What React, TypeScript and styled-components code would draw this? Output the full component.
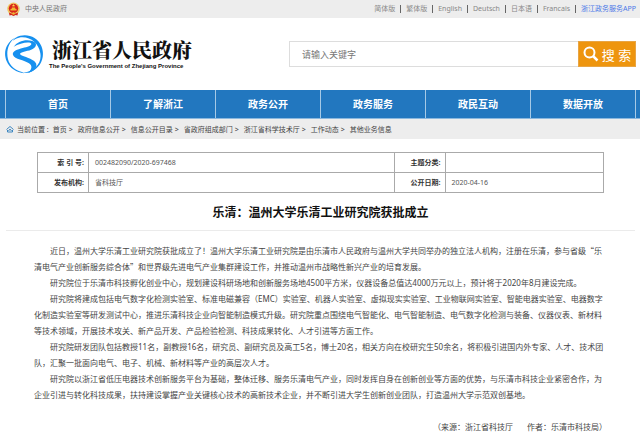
import React from "react";
import styled, { createGlobalStyle } from "styled-components";

const cjk = '"Noto Sans CJK SC", sans-serif';
const sans = `"Noto Sans", ${cjk}`;

const GlobalStyle = createGlobalStyle`
  * { box-sizing: border-box; }
  body { margin: 0; background: #fff; color: #444; font-family: ${sans}; }
  a { color: inherit; text-decoration: none; }
`;

const TopBar = styled.div`
  display: flex;
  justify-content: space-between;
  align-items: center;
  height: 18px;
  padding: 0 4px 0 7px;
  background: #ededed;
  color: #777;
  font-size: 7px;
  line-height: 16px;
  white-space: nowrap;
`;

const CentralLink = styled.a`
  display: flex;
  align-items: center;
  gap: 5px;
`;

const Languages = styled.nav`
  display: flex;
  align-items: center;
`;

const Language = styled.a<{ $accent?: boolean }>`
  display: flex;
  align-items: center;
  color: ${(p) => (p.$accent ? "#4a78e8" : "#888")};
  &:not(:first-child)::before {
    content: "";
    width: 1px;
    height: 8px;
    margin: 0 5px;
    background: #666;
  }
`;

const Header = styled.header`
  display: flex;
  justify-content: space-between;
  align-items: center;
  height: 72px;
  padding: 0 4px 0 5px;
`;

const Brand = styled.a`
  display: flex;
  align-items: center;
  gap: 5px;
  color: #111;
`;

const BrandText = styled.span`
  display: flex;
  flex-direction: column;
  white-space: nowrap;
`;

const BrandName = styled.span`
  padding-left: 3px;
  font: 900 20px/24px "Noto Serif CJK SC", ${cjk};
`;

const BrandEnglish = styled.span`
  font: bold 6px/8px "Liberation Sans", sans-serif;
`;

const Search = styled.form`
  display: flex;
  width: 55%;
  height: 26px;
`;

const SearchInput = styled.input`
  flex: 1;
  min-width: 0;
  padding: 0 12px;
  border: 1px solid #ddd;
  border-right: 0;
  border-radius: 0;
  background: #fff;
  font: 9px ${sans};
  outline: 0;
  &::placeholder { color: #777; opacity: 1; }
`;

const SearchButton = styled.button`
  display: flex;
  align-items: center;
  justify-content: center;
  gap: 3px;
  width: 58px;
  padding: 0;
  border: 1px solid #e8a544;
  background: #ee950e;
  color: #fff;
  font: 13px ${sans};
  white-space: pre;
`;

const MainNav = styled.nav`
  display: flex;
  height: 29px;
  padding: 0 4px 0 5px;
  border-bottom: 1px solid #8bb8de;
  background: #2277bf;
`;

const NavLink = styled.a`
  flex: 1;
  border-left: 1px solid #a5c9e6;
  color: #fff;
  font-size: 10px;
  font-weight: bold;
  line-height: 28px;
  text-align: center;
  &:last-child { border-right: 1px solid #a5c9e6; }
`;

const Breadcrumb = styled.nav`
  display: flex;
  align-items: center;
  gap: 3px;
  height: 20px;
  padding: 0 6px;
  background: #ededed;
  color: #444;
  font-size: 7px;
  white-space: nowrap;
`;

const Trail = styled.span`
  display: flex;
  gap: 4px;
`;

const Crumb = styled.a`
  &:not(:last-child)::after { content: ">"; margin: 0 1px 0 2px; }
`;

const InfoTable = styled.table`
  width: calc(100% - 73px);
  margin: 13px 36px 0 37px;
  border-collapse: collapse;
  table-layout: fixed;
  font-size: 7px;
  line-height: 10px;
  th, td { height: 20px; padding: 0 4px; border: 1px solid #aaa; }
  th { width: 9%; color: #333; text-align: right; white-space: pre; }
  td { padding-left: 6px; color: #555; }
  td:last-child { width: 28%; }
`;

const Title = styled.h1`
  margin: 10px 5px 0 6px;
  padding-bottom: 7px;
  border-bottom: 1px solid #ebebeb;
  color: #111;
  font-size: 12px;
  line-height: 20px;
  text-align: center;
`;

const Article = styled.article`
  padding: 12px 33px 0 34px;
  font-size: 8px;
  line-height: 16px;
`;

const Paragraph = styled.p<{ $font?: string }>`
  margin: 0;
  font-family: ${(p) => p.$font ?? sans};
  text-indent: 2em;
`;

const Source = styled.footer`
  display: flex;
  justify-content: flex-end;
  gap: 14px;
  padding-top: 16px;
`;

const Emblem = () => (
  <svg width="13" height="15" viewBox="0 0 26 30" aria-hidden="true">
    <ellipse cx="13" cy="14" rx="12.5" ry="13" fill="#efc763" />
    <circle cx="13" cy="13" r="9.5" fill="#d8251b" />
    <path d="M7 17h12v-3h-2l-1-3h-6l-1 3H7z" fill="#f0b830" />
    <path d="m13 4 1 2h2l-1.500 1.500.5 2-2-1-2 1 .5-2L10 6h2z" fill="#ffd84a" />
    <path d="M4 21q9 5 18 0l-1 6-4-1-4 2-4-2-4 1z" fill="#d2231a" />
    <circle cx="13" cy="23" r="2.500" fill="#f0b830" />
  </svg>
);

const Logo = () => (
  <svg width="39" height="39" viewBox="0 0 117 117" aria-hidden="true" fill="#1690ef">
    <path d="M29 8C2 24-6 54 5 79c9 21 30 34 52 36l-6-4C31 107 14 93 9 73 3 49 10 24 29 8z" />
    <path d="M32 8C60-7 96 3 109 33c13 31-1 65-31 77-9 4-18 5-26 4 37-4 59-29 54-59C101 23 73 2 42 8c-7 1-15 6-19 9 2-4 5-7 9-9z" />
    <path d="M26 36C37 18 62 12 82 18c15 4 14 17 1 24-12 7-31 7-37 13-4 5 9 8 22 13 22 8 33 18 22 34-5 6-13 10-21 12 12-11 14-21 3-29-14-10-43-12-48-25-4-11 14-17 29-21 14-4 27-7 26-13-2-7-33-4-54 10z" />
  </svg>
);

const SearchIcon = () => (
  <svg width="16" height="16" viewBox="0 0 16 16" fill="none" stroke="#fff" aria-hidden="true">
    <circle cx="6.500" cy="6.500" r="5" strokeWidth="2" />
    <path d="m10 10 4.500 4.500" strokeWidth="2.500" />
  </svg>
);

const HomeIcon = () => (
  <svg width="8" height="8" viewBox="0 0 16 16" fill="none" stroke="#3c86c0" strokeWidth="2" aria-hidden="true">
    <path d="m1 9 7-6 7 6M3 10v4h10v-4M5 12l3-4 3 4" />
  </svg>
);

const languages = ["简体版", "繁体版", "English", "Deutsch", "日本语", "Francais", "浙江政务服务APP"];
const sections = ["首页", "了解浙江", "政务公开", "政务服务", "政民互动", "数据开放"];
const crumbs = ["首页", "政府信息公开", "信息公开目录", "省政府组成部门", "浙江省科学技术厅", "工作动态", "其他业务信息"];

const lead =
  "近日，温州大学乐清工业研究院获批成立了！温州大学乐清工业研究院是由乐清市人民政府与温州大学共同举办的独立法人机构，注册在乐清，参与省级“乐清电气产业创新服务综合体”和世界级先进电气产业集群建设工作，并推动温州市战略性新兴产业的培育发展。";

const paragraphs = [
  "研究院位于乐清市科技孵化创业中心，规划建设科研场地和创新服务场地4500平方米，仪器设备总值达4000万元以上，预计将于2020年8月建设完成。",
  "研究院将建成包括电气数字化检测实验室、标准电磁兼容（EMC）实验室、机器人实验室、虚拟现实实验室、工业物联网实验室、智能电器实验室、电器数字化制造实验室等研发测试中心，推进乐清科技企业向智能制造模式升级。研究院重点围绕电气智能化、电气智能制造、电气数字化检测与装备、仪器仪表、新材料等技术领域，开展技术攻关、新产品开发、产品检验检测、科技成果转化、人才引进等方面工作。",
  "研究院研发团队包括教授11名，副教授16名，研究员、副研究员及高工5名，博士20名，相关方向在校研究生50余名，将积极引进国内外专家、人才、技术团队，汇聚一批面向电气、电子、机械、新材料等产业的高层次人才。",
  "研究院以浙江省低压电器技术创新服务平台为基础，整体迁移、服务乐清电气产业，同时发挥自身在创新创业等方面的优势，与乐清市科技企业紧密合作，为企业引进与转化科技成果，扶持建设掌握产业关键核心技术的高新技术企业，并不断引进大学生创新创业团队，打造温州大学示范双创基地。",
];

export default function App() {
  return (
    <div lang="zh-CN">
      <GlobalStyle />
      <TopBar>
        <CentralLink href="#"><Emblem />中央人民政府</CentralLink>
        <Languages aria-label="语言">
          {languages.map((name, i) => (
            <Language href="#" key={name} $accent={i === languages.length - 1}>{name}</Language>
          ))}
        </Languages>
      </TopBar>
      <Header>
        <Brand href="#">
          <Logo />
          <BrandText>
            <BrandName>浙江省人民政府</BrandName>
            <BrandEnglish>The People's Government of Zhejiang Province</BrandEnglish>
          </BrandText>
        </Brand>
        <Search role="search" onSubmit={(e) => e.preventDefault()}>
          <SearchInput type="text" aria-label="请输入关键字" placeholder="请输入关键字" />
          <SearchButton type="submit"><SearchIcon />搜 索</SearchButton>
        </Search>
      </Header>
      <MainNav>
        {sections.map((name) => <NavLink href="#" key={name}>{name}</NavLink>)}
      </MainNav>
      <Breadcrumb>
        <HomeIcon />
        <Trail>
          <span>当前位置 :</span>
          {crumbs.map((name) => <Crumb href="#" key={name}>{name}</Crumb>)}
        </Trail>
      </Breadcrumb>
      <main>
        <InfoTable>
          <tbody>
            <tr>
              <th scope="row">索 引 号:</th><td>002482090/2020-697468</td>
              <th scope="row">主题分类:</th><td />
            </tr>
            <tr>
              <th scope="row">发布机构:</th><td>省科技厅</td>
              <th scope="row">公开日期:</th><td>2020-04-16</td>
            </tr>
          </tbody>
        </InfoTable>
        <Title>乐清：温州大学乐清工业研究院获批成立</Title>
        <Article>
          <Paragraph $font={cjk}>{lead}</Paragraph>
          {paragraphs.map((text) => <Paragraph key={text}>{text}</Paragraph>)}
          <Source><span>（来源：浙江省科技厅</span><span>作者：乐清市科技局）</span></Source>
        </Article>
      </main>
    </div>
  );
}
